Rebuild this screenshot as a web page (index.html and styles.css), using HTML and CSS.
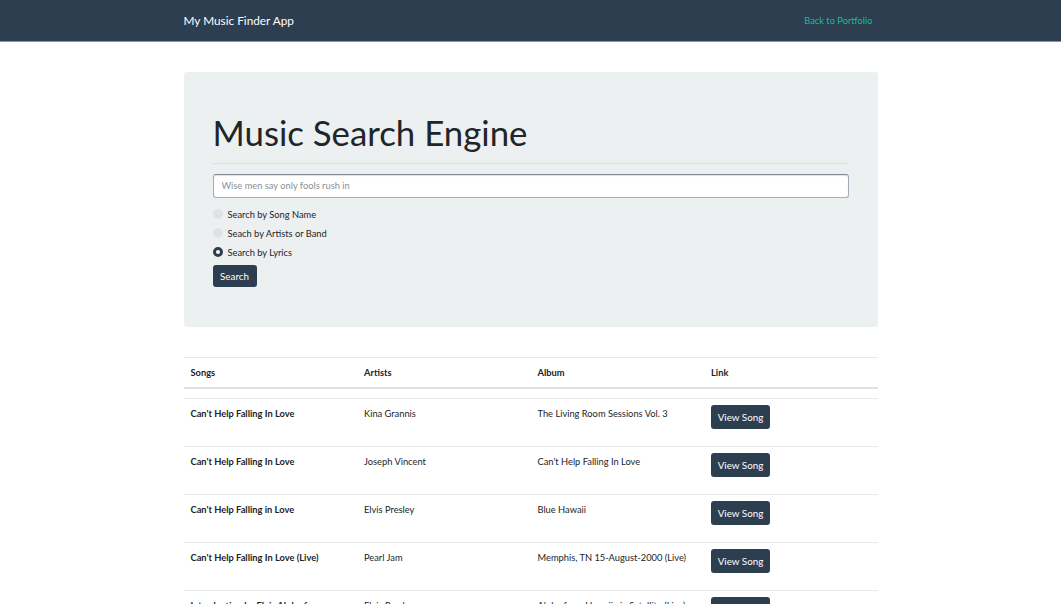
FILE: index.html
```html
<!DOCTYPE html>
<html lang="en">
<head>
<meta charset="utf-8">
<title>My Music Finder App</title>
<link rel="stylesheet" href="styles.css">
</head>
<body>
<nav class="navbar">
  <div class="container nav-inner">
    <a class="brand" href="#">My Music Finder App</a>
    <a class="nav-link" href="#">Back to Portfolio</a>
  </div>
</nav>
<main class="container">
  <section class="jumbotron">
    <h1 class="title">Music Search Engine</h1>
    <hr class="divider">
    <form class="search-form">
      <input class="search-input" type="text" placeholder="Wise men say only fools rush in">
      <label class="radio-row"><input type="radio" name="mode" class="radio"><span>Search by Song Name</span></label>
      <label class="radio-row"><input type="radio" name="mode" class="radio"><span>Seach by Artists or Band</span></label>
      <label class="radio-row"><input type="radio" name="mode" class="radio" checked><span>Search by Lyrics</span></label>
      <button type="button" class="btn btn-search">Search</button>
    </form>
  </section>
  <table class="results">
    <thead>
      <tr><th>Songs</th><th>Artists</th><th>Album</th><th>Link</th></tr>
    </thead>
    <tbody>
      <tr class="spacer"><td colspan="4"></td></tr>
      <tr><td class="song">Can't Help Falling In Love</td><td>Kina Grannis</td><td>The Living Room Sessions Vol. 3</td><td><a class="btn btn-view" href="#">View Song</a></td></tr>
      <tr><td class="song">Can't Help Falling In Love</td><td>Joseph Vincent</td><td>Can't Help Falling In Love</td><td><a class="btn btn-view" href="#">View Song</a></td></tr>
      <tr><td class="song">Can't Help Falling in Love</td><td>Elvis Presley</td><td>Blue Hawaii</td><td><a class="btn btn-view" href="#">View Song</a></td></tr>
      <tr><td class="song">Can't Help Falling In Love (Live)</td><td>Pearl Jam</td><td>Memphis, TN 15-August-2000 (Live)</td><td><a class="btn btn-view" href="#">View Song</a></td></tr>
      <tr><td class="song">Introduction by Elvis Aloha from Hawaii</td><td>Elvis Presley</td><td>Aloha from Hawaii via Satellite (Live)</td><td><a class="btn btn-view" href="#">View Song</a></td></tr>
    </tbody>
  </table>
</main>
</body>
</html>
```
FILE: styles.css
```css
* { box-sizing: border-box; }
html, body { margin: 0; padding: 0; }
body {
  font-family: Lato, "Open Sans", "Liberation Sans", sans-serif;
  font-size: 9.3px;
  color: #212529;
  background: #fff;
}
.container {
  width: 694px;
  margin: 0 auto;
}
.navbar {
  background: #2c3e50;
  height: 42px;
  border-bottom: 1px solid #8a97a3;
}
.nav-inner {
  display: flex;
  align-items: center;
  justify-content: space-between;
  height: 41px;
}
.brand {
  color: #fff;
  text-decoration: none;
  font-size: 11.8px;
}
.nav-link {
  color: #18bc9c;
  text-decoration: none;
  font-size: 9.3px;
  margin-right: 5px;
}
main.container { padding-top: 30px; }
.jumbotron {
  background: #ecf0f1;
  border-radius: 3px;
  padding: 40px 29px 40px;
}
.title {
  margin: 0;
  font-size: 34.8px;
  font-weight: 400;
  line-height: 1.2;
  color: #212529;
}
.divider {
  border: 0;
  border-top: 1px solid #d7dde0;
  margin: 9px 0 10px;
}
.search-form {
  display: flex;
  flex-direction: column;
  align-items: flex-start;
}
.search-input {
  width: 100%;
  height: 24px;
  border: 1px solid #a3adb6;
  border-top-color: #7f8a95;
  border-radius: 3px;
  box-shadow: inset 0 1px 1px rgba(0,0,0,0.12);
  background: #fff;
  padding: 0 8px;
  font-family: inherit;
  font-size: 9.3px;
  color: #212529;
  margin-bottom: 7px;
}
.search-input::placeholder { color: #8a8f94; }
.radio-row {
  display: flex;
  align-items: center;
  height: 19px;
  gap: 5px;
  color: #212529;
  font-size: 9.3px;
}
.radio {
  appearance: none;
  -webkit-appearance: none;
  width: 10px;
  height: 10px;
  margin: 0;
  border-radius: 50%;
  background: #dfe3e6;
}
.radio:checked {
  background: #fff;
  border: 3px solid #2c3e50;
}
.btn {
  display: inline-flex;
  align-items: center;
  justify-content: center;
  background: #2c3e50;
  color: #fff;
  border: 0;
  border-radius: 3px;
  font-family: inherit;
  text-decoration: none;
  cursor: pointer;
}
.btn-search {
  margin-top: 3px;
  width: 44px;
  height: 22px;
  font-size: 9.8px;
  padding: 0;
}
.results {
  width: 100%;
  margin-top: 30px;
  border-collapse: collapse;
  table-layout: fixed;
}
.results th, .results td {
  text-align: left;
  vertical-align: top;
  padding: 8px 7px 7px;
  border-top: 1px solid #e6e8ea;
  line-height: 14px;
}
.results th {
  font-weight: 700;
  font-size: 9.3px;
  height: 30px;
  padding-top: 8px;
  border-bottom: 2px solid #dee2e6;
}
.results tr.spacer td {
  height: 11px;
  padding: 0;
  border-top: 0;
}
.results tbody tr td { height: 48px; }
.results tbody tr.spacer td { height: 11px; }
.results td { font-size: 9.3px; }
.results td.song { font-weight: 700; }
.btn-view {
  width: 59px;
  height: 24px;
  font-size: 9.8px;
  margin-top: -2px;
}
```
